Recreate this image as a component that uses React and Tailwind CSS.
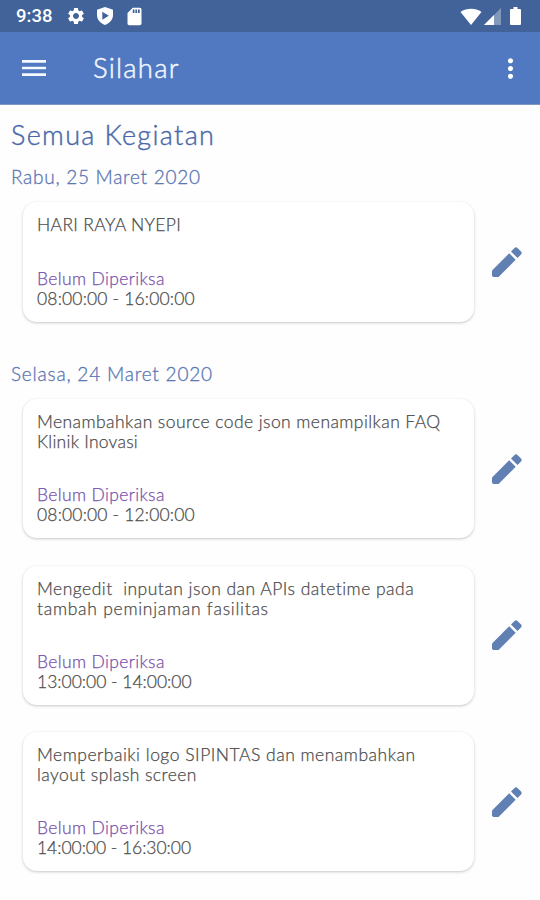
import React from "react";
import { MdMenu, MdMoreVert, MdSdCard, MdSettings } from "react-icons/md";

const days = [
  {
    date: "Rabu, 25 Maret 2020",
    dateStyle: "tracking-[0.72px]",
    activities: [
      {
        lines: [{ text: "HARI RAYA NYEPI", style: "tracking-[0.35px]" }],
        time: "08:00:00 - 16:00:00",
        timeStyle: "tracking-[0.17px]",
        height: "h-[120px]",
      },
    ],
  },
  {
    date: "Selasa, 24 Maret 2020",
    dateStyle: "tracking-[0.8px]",
    activities: [
      {
        lines: [
          { text: "Menambahkan source code json menampilkan FAQ", style: "tracking-[0.42px]" },
          { text: "Klinik Inovasi", style: "tracking-[0.25px]" },
        ],
        time: "08:00:00 - 12:00:00",
        timeStyle: "tracking-[0.17px]",
        height: "h-[139px]",
      },
      {
        lines: [
          { text: "Mengedit  inputan json dan APIs datetime pada", style: "tracking-[0.48px]" },
          { text: "tambah peminjaman fasilitas", style: "tracking-[0.73px]" },
        ],
        time: "13:00:00 - 14:00:00",
        timeStyle: "tracking-[0px]",
        height: "h-[139px]",
      },
      {
        lines: [
          { text: "Memperbaiki logo SIPINTAS dan menambahkan", style: "tracking-[0.5px]" },
          { text: "layout splash screen", style: "tracking-[0.42px]" },
        ],
        time: "14:00:00 - 16:30:00",
        timeStyle: "tracking-[-0.03px]",
        height: "h-[139px]",
      },
    ],
  },
];

const App = () => {
  return (
    <div className="h-[900px] w-[540px] overflow-hidden bg-[#fefefe] font-['Lato',sans-serif] font-light">
      <StatusBar />
      <header className="flex h-[73px] items-center border-b border-[#7f97c4] bg-[#5079c1] pr-[14px] pl-[18px] text-white">
        <MdMenu className="size-8 text-[#f4f8ff]" />
        <h1 className="ml-[43px] text-[27.5px] leading-8 tracking-[1.2px] text-[#f2f6ff] [-webkit-text-stroke:0.5px]">Silahar</h1>
        <MdMoreVert className="ml-auto size-[31px]" />
      </header>

      <main className="pt-[14px]">
        <h2 className="pl-[11px] text-[27px] leading-8 tracking-[1.35px] text-[#4a68a8] [-webkit-text-stroke:0.4px]">Semua Kegiatan</h2>
        {days.map((day) => (
          <section key={day.date} className="mb-[26px]">
            <h3 className={`pt-[14px] pb-[13px] pl-[11px] text-[19px] leading-6 text-[#5a76b4] [-webkit-text-stroke:0.3px] ${day.dateStyle}`}>
              {day.date}
            </h3>
            <div className="flex flex-col gap-[27.5px]">
              {day.activities.map((activity) => (
                <ActivityRow key={activity.lines[0].text} activity={activity} />
              ))}
            </div>
          </section>
        ))}
      </main>
    </div>
  );
};

const ActivityRow = ({ activity }) => {
  return (
    <div className="flex items-center pr-[18px] pl-[23px]">
      <article
        className={`flex w-[451px] flex-col justify-between rounded-[14px] bg-white px-[14px] pt-[13px] pb-[13px] text-[17.5px] leading-5 text-[#4c4c4c] shadow-[0_1px_3px_rgba(0,0,0,0.22)] [-webkit-text-stroke:0.25px] ${activity.height}`}
      >
        <div>
          {activity.lines.map((line) => (
            <p key={line.text} className={`whitespace-pre ${line.style}`}>{line.text}</p>
          ))}
        </div>
        <div>
          <p className="tracking-[0.35px] text-[#7a50ac]">Belum Diperiksa</p>
          <p className={activity.timeStyle}>{activity.time}</p>
        </div>
      </article>
      <PencilIcon />
    </div>
  );
};

const PencilIcon = () => {
  return (
    <svg viewBox="0 0 30 30" className="ml-auto size-[30px] text-[#607fb3]" fill="currentColor">
      <path d="M0 23.5 17.2 6.3l6.5 6.5L6.5 30H1.2L0 28.8v-5.3Z" />
      <path d="M19 4.5 22.3 1.2Q24 -0.5 25.7 1.2L28.8 4.3Q30.5 6 28.8 7.7L25.5 11Z" />
    </svg>
  );
};

const StatusBar = () => {
  return (
    <div className="flex h-8 items-center bg-[#416399] pr-[19px] pl-4 text-white">
      <span className="w-[37px] font-['Roboto',sans-serif] text-[18.5px] leading-5 font-medium">9:38</span>
      <MdSettings className="ml-[13px] size-5" />
      <svg viewBox="0 0 18 20" className="ml-[10px] h-5 w-[18px]" fill="currentColor">
        <path fillRule="evenodd" d="M9 1 17 3.8V9c0 4.7-3.2 8.2-8 10-4.8-1.8-8-5.3-8-10V3.8L9 1ZM6.3 5.8v8L12.8 9.8 6.3 5.8Z" />
      </svg>
      <MdSdCard className="ml-[10px] size-[21px]" />
      <svg viewBox="0 0 22 17" className="ml-auto h-[17px] w-[22px]" fill="currentColor">
        <path d="M11 17 .5 4C6.5 -.3 15.5 -.3 21.5 4L11 17Z" />
      </svg>
      <svg viewBox="0 0 17 17" className="ml-[2px] h-[17px] w-[17px]" fill="currentColor">
        <path opacity=".35" d="M17 0v17H0L17 0Z" />
        <path d="M10 7v10H0L10 7Z" />
      </svg>
      <svg viewBox="0 0 11 18" className="ml-[9px] h-[18px] w-[11px]" fill="currentColor">
        <path d="M3.5 0h4v2H10q1 0 1 1v14q0 1-1 1H1q-1 0-1-1V3q0-1 1-1h2.5Z" />
      </svg>
    </div>
  );
};

export default App;
